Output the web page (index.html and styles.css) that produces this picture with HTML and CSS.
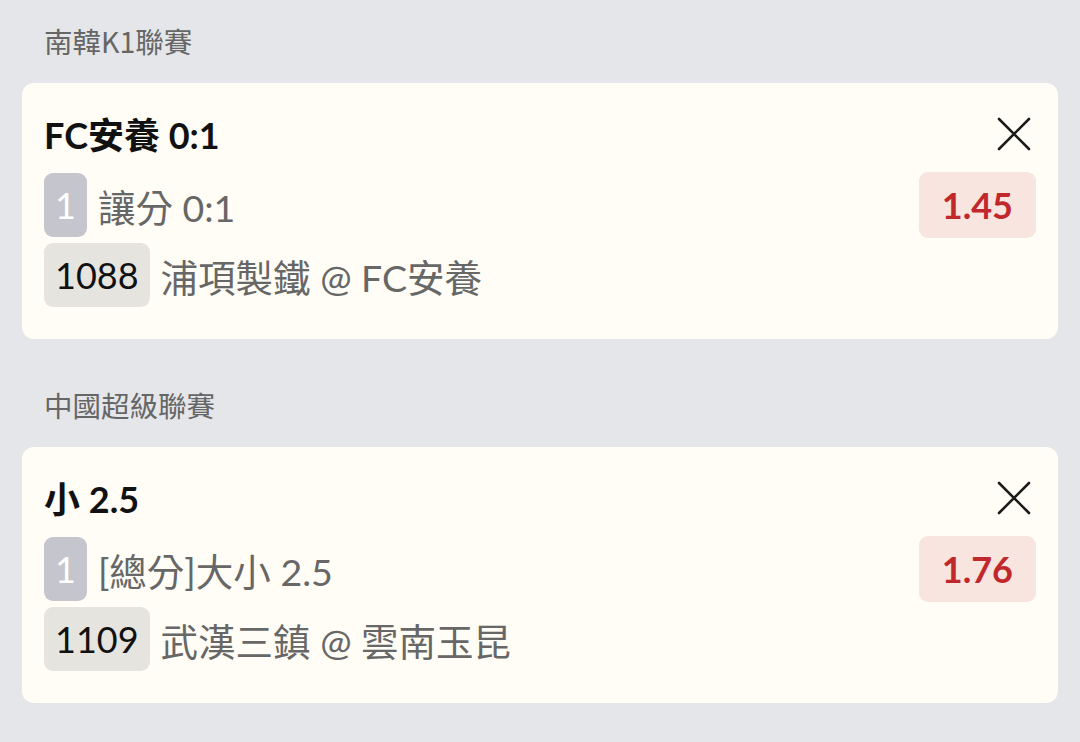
FILE: index.html
```html
<!DOCTYPE html>
<html lang="zh-Hant">

<head>
	<meta charset="UTF-8">
	<meta name="viewport" content="width=device-width, initial-scale=1.0">
	<title>Bet slip</title>
	<link rel="stylesheet" href="styles.css">
</head>

<body>
	<div class="slip">
		<div class="league">南韓K1聯賽</div>
		<div class="card">
			<div class="card-head">
				<div class="title">FC安養 0:1</div>
				<svg class="close" width="34" height="34" viewBox="0 0 34 34">
					<path d="M2 2 L32 32 M32 2 L2 32" stroke="#1b1b1b" stroke-width="2.6" stroke-linecap="round" fill="none" />
				</svg>
			</div>
			<div class="row">
				<span class="badge grey">1</span>
				<span class="text">讓分 0:1</span>
				<span class="odds">1.45</span>
			</div>
			<div class="row">
				<span class="badge light">1088</span>
				<span class="text">浦項製鐵 @ FC安養</span>
			</div>
		</div>

		<div class="league">中國超級聯賽</div>
		<div class="card">
			<div class="card-head">
				<div class="title">小 2.5</div>
				<svg class="close" width="34" height="34" viewBox="0 0 34 34">
					<path d="M2 2 L32 32 M32 2 L2 32" stroke="#1b1b1b" stroke-width="2.6" stroke-linecap="round" fill="none" />
				</svg>
			</div>
			<div class="row">
				<span class="badge grey">1</span>
				<span class="text">[總分]大小 2.5</span>
				<span class="odds">1.76</span>
			</div>
			<div class="row">
				<span class="badge light">1109</span>
				<span class="text">武漢三鎮 @ 雲南玉昆</span>
			</div>
		</div>
	</div>
</body>

</html>
```

FILE: styles.css
```css
body {
	margin: 0;
	background-color: #e5e6e9;
	font-family: "Lato", "Noto Sans CJK TC", sans-serif;
}

.slip {
	padding: 25px 22px 0;
}

.league {
	font-family: "Noto Sans CJK TC", sans-serif;
	font-size: 28.5px;
	line-height: 32px;
	color: #666666;
	padding-left: 22px;
	margin-bottom: 26px;
}

.card {
	background-color: #fffdf5;
	border-radius: 12px;
	padding: 30px 22px 32px;
	margin-bottom: 50px;
}

.card-head {
	display: flex;
	justify-content: space-between;
	align-items: center;
	height: 40px;
	margin-bottom: 19px;
}

.title {
	font-size: 36px;
	font-weight: 700;
	color: #111111;
}

.close {
	margin-right: 5px;
	margin-top: 1px;
}

.row {
	display: flex;
	align-items: center;
	height: 66px;
	margin-bottom: 5px;
}

.row:last-child {
	height: 64px;
	margin-bottom: 0;
}

.badge {
	height: 64px;
	line-height: 64px;
	padding: 0 11px;
	border-radius: 9px;
	font-size: 36px;
}

.grey {
	background-color: #c4c5cd;
	color: #ffffff;
}

.light {
	background-color: #e6e4df;
	color: #111111;
}

.text {
	margin-left: 11px;
	font-size: 37.5px;
	color: #676767;
}

.odds {
	margin-left: auto;
	height: 66px;
	line-height: 66px;
	padding: 0 23px;
	border-radius: 9px;
	background-color: #f8e5df;
	color: #c0282c;
	font-size: 36px;
	font-weight: 700;
}
```
